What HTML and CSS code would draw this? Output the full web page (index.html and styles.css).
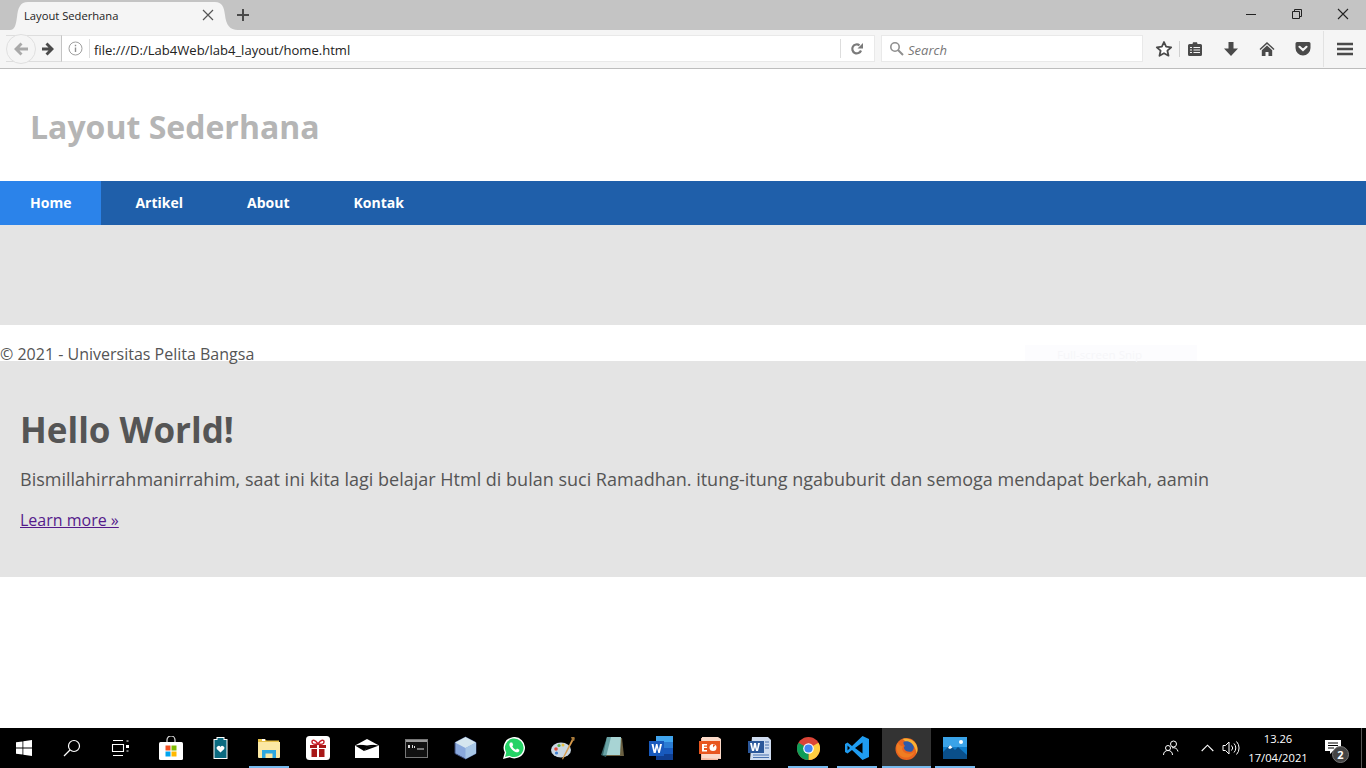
FILE: index.html
```html
<!DOCTYPE html>
<html lang="en">
<head>
    <meta charset="UTF-8">
    <meta name="viewport" content="width=device-width, initial-scale=1.0">
    <title>Layout Sederhana</title>
    <link rel="stylesheet" href="styles.css">
</head>
<body>
    <div class="tabstrip">
        <div class="tab">
            <span class="tab-title">Layout Sederhana</span>
            <svg class="tab-close" width="12" height="12" viewBox="0 0 12 12"><path d="M1 1l10 10M11 1L1 11" stroke="#555" stroke-width="1.2" fill="none"/></svg>
        </div>
        <svg class="new-tab" width="14" height="14" viewBox="0 0 14 14"><path d="M7 1v12M1 7h12" stroke="#4a4a4a" stroke-width="2" fill="none"/></svg>
        <div class="window-controls">
            <svg width="46" height="28" viewBox="0 0 46 28"><path d="M18 14.5h10" stroke="#222" fill="none"/></svg>
            <svg width="46" height="28" viewBox="0 0 46 28"><path d="M18.5 11.5h7v7h-7zM20.5 11.5v-2h7v7h-2" stroke="#222" fill="none"/></svg>
            <svg width="46" height="28" viewBox="0 0 46 28"><path d="M18 9l10 10M28 9L18 19" stroke="#222" stroke-width="1.1" fill="none"/></svg>
        </div>
    </div>

    <div class="toolbar">
        <div class="nav-buttons">
            <div class="back-btn">
                <svg width="16" height="14" viewBox="0 0 16 14"><path d="M7.500 0.500L1 7l6.500 6.500 2-2L6.500 8.500H15v-3H6.500l3-3z" fill="#a9a9a9"/></svg>
            </div>
            <svg class="forward" width="14" height="14" viewBox="0 0 14 14"><path d="M6.500 0.500L13 7l-6.500 6.500-2-2 3-3H1v-3h6.500l-3-3z" fill="#4a4a4a"/></svg>
        </div>
        <div class="urlbar">
            <svg class="info-icon" width="15" height="15" viewBox="0 0 15 15"><circle cx="7.500" cy="7.500" r="6.500" fill="none" stroke="#a0a0a0"/><path d="M7.500 6.500v4.500M7.500 3.800v1.500" stroke="#909090" stroke-width="1.400"/></svg>
            <span class="url-text">file:///D:/Lab4Web/lab4_layout/home.html</span>
            <div class="reload">
                <svg width="14" height="14" viewBox="0 0 14 14"><path d="M11 8.500A4.500 4.500 0 1 1 9.500 3.300" fill="none" stroke="#7a7a7a" stroke-width="2.200"/><path d="M7.500 6.500H13V1z" fill="#7a7a7a"/></svg>
            </div>
        </div>
        <div class="searchbar">
            <svg width="15" height="15" viewBox="0 0 15 15"><circle cx="6" cy="6" r="4.200" fill="none" stroke="#8f8f8f" stroke-width="1.600"/><path d="M9 9l5 5" stroke="#8f8f8f" stroke-width="2"/></svg>
            <span class="search-text">Search</span>
        </div>
        <div class="toolbar-icons">
            <svg class="ti-star" width="18" height="18" viewBox="0 0 18 18"><path d="M9 2l2.100 4.700 5.100.6-3.800 3.400 1.100 5L9 13.200l-4.500 2.500 1.100-5L1.800 7.300l5.100-.6z" fill="#fff" stroke="#4a4a4a" stroke-width="1.800" stroke-linejoin="round"/></svg>
            <span class="ti-sep"></span>
            <svg class="ti-clip" width="16" height="16" viewBox="0 0 16 16"><path d="M2.500 3H5.500L6 1.200h4L10.500 3h3A1.500 1.500 0 0 1 15 4.500v9a1.500 1.500 0 0 1-1.500 1.500h-11A1.500 1.500 0 0 1 1 13.500v-9A1.500 1.500 0 0 1 2.500 3z" fill="#4a4a4a"/><path d="M3 6.500h2M6.500 6.500h6.500M3 9h2M6.500 9h6.500M3 11.500h2M6.500 11.500h6.500" stroke="#f5f5f5" stroke-width="1.100"/></svg>
            <svg class="ti-down" width="16" height="16" viewBox="0 0 16 16"><path d="M5.500 1h5v6.500H15L8 15 1 7.500h4.500z" fill="#4a4a4a"/></svg>
            <svg class="ti-home" width="16" height="16" viewBox="0 0 16 16"><path d="M8 1L0.500 8l1 1L8 3l6.500 6 1-1z" fill="#4a4a4a"/><path d="M8 4.500L2.800 9.300V15h3.700v-4h3v4h3.700V9.300z" fill="#4a4a4a"/></svg>
            <svg class="ti-pocket" width="16" height="16" viewBox="0 0 16 16"><path d="M2 1h12a1.500 1.500 0 0 1 1.500 1.500V7A7.500 7.500 0 0 1 .5 7V2.500A1.500 1.500 0 0 1 2 1z" fill="#4a4a4a"/><path d="M4.500 5.800L8 9l3.500-3.200" fill="none" stroke="#f5f5f5" stroke-width="2.200" stroke-linecap="round"/></svg>
            <span class="ti-sep ti-sep-tall"></span>
            <svg class="ti-menu" width="16" height="14" viewBox="0 0 16 14"><path d="M0 2h16M0 7h16M0 12h16" stroke="#4a4a4a" stroke-width="2.600"/></svg>
        </div>
    </div>

    <div class="page">
        <header class="site-header">
            <h1>Layout Sederhana</h1>
        </header>
        <nav class="site-nav">
            <a class="active" href="#">Home</a>
            <a href="#">Artikel</a>
            <a href="#">About</a>
            <a href="#">Kontak</a>
        </nav>
        <div class="empty-band"></div>
        <footer class="site-footer">&copy; 2021 - Universitas Pelita Bangsa</footer>
        <section class="hero">
            <h1>Hello World!</h1>
            <p>Bismillahirrahmanirrahim, saat ini kita lagi belajar Html di bulan suci Ramadhan. itung-itung ngabuburit dan semoga mendapat berkah, aamin</p>
            <a href="#">Learn more &raquo;</a>
        </section>
        <div class="snip-toast">Full-screen Snip</div>
    </div>

    <div class="taskbar">
        <div class="sys-btn">
            <svg width="16" height="16" viewBox="0 0 16 16"><path d="M0 2.300l6.500-.9v6.200H0zM7.300 1.300L16 0v7.600H7.300zM0 8.400h6.500v6.200L0 13.700zM7.300 8.400H16V16l-8.700-1.300z" fill="#fff"/></svg>
        </div>
        <div class="sys-btn">
            <svg width="18" height="18" viewBox="0 0 18 18"><circle cx="11" cy="7" r="5.500" fill="none" stroke="#fff" stroke-width="1.200"/><path d="M7 11l-6 6" stroke="#fff" stroke-width="1.300"/></svg>
        </div>
        <div class="sys-btn">
            <svg width="18" height="16" viewBox="0 0 18 16"><path d="M2 .5h10M2 15.500h10M1.500 4.500h11v7h-11z" fill="none" stroke="#fff" stroke-width="1.100"/><path d="M15 5h3v3h-3z" fill="#fff"/><path d="M15.500 11h2M15.500 1h2" stroke="#fff"/></svg>
        </div>
        <div class="app-icons">
            <div class="app">
                <svg width="24" height="24" viewBox="0 0 24 24"><path d="M8 7V4a4 4 0 0 1 8 0v3" fill="none" stroke="#ddd" stroke-width="1.200"/><rect y="6" width="24" height="18" rx="1.500" fill="#fff"/><path d="M6.500 9.500h5v5h-5z" fill="#f25022"/><path d="M12.500 9.500h5v5h-5z" fill="#7fba00"/><path d="M6.500 15.500h5v5h-5z" fill="#00a4ef"/><path d="M12.500 15.500h5v5h-5z" fill="#ffb900"/></svg>
            </div>
            <div class="app">
                <svg width="15" height="22" viewBox="0 0 15 22"><path d="M3.500 0h8v2h3v20H.5V2h3z" fill="#fff"/><path d="M4.500 1h6v2h3v18h-12V3h3z" fill="#0b6a80"/><path d="M7.500 15.500L3.800 12a2 2 0 0 1 3.700-2 2 2 0 0 1 3.700 2z" fill="#fff"/></svg>
            </div>
            <div class="app underlined">
                <svg width="22" height="20" viewBox="0 0 22 20"><path d="M0 1h7l1.500 1.500H21V19H0z" fill="#e8c24a"/><path d="M0 4h22v15a1 1 0 0 1-1 1H1a1 1 0 0 1-1-1z" fill="#fbe8a4"/><path d="M4 1h3v2H4z" fill="#fff"/><path d="M4 20v-8h14v8h-3.500v-4.500h-7V20z" fill="#2ea8df"/></svg>
            </div>
            <div class="app">
                <svg width="24" height="24" viewBox="0 0 24 24"><rect width="24" height="24" rx="3.500" fill="#fff"/><path d="M4 9h16v3H4zM5.500 13h13v8h-13z" fill="#a81818"/><path d="M11 9h2v12h-2z" fill="#fff"/><path d="M12 8C9 3 6 3.500 6 6s3 2.500 6 2c3 .5 6 .5 6-2s-3-3-6 2z" fill="none" stroke="#c8202a" stroke-width="1.500"/></svg>
            </div>
            <div class="app">
                <svg width="24" height="19" viewBox="0 0 24 19"><path d="M0 6.500L12 0l12 6.500V19H0z" fill="#fff"/><path d="M0 6.500L9 12l3.500-4L24 6.500 12 5z" fill="#000"/><path d="M9 12l3.500-4.500L24 6.500z" fill="#000"/><path d="M5 5.500L12 1.500l7 4-7 1z" fill="#fff"/></svg>
            </div>
            <div class="app">
                <svg width="23" height="19" viewBox="0 0 23 19"><rect x=".5" y=".5" width="22" height="18" fill="#111" stroke="#777"/><path d="M1 1h21v2H1z" fill="#9a9a9a"/><path d="M3 6h2v3H3zM7 6h1v3H7zM9 7h1v2H9zM12 9.500h7v1h-7z" fill="#ddd"/></svg>
            </div>
            <div class="app">
                <svg width="23" height="24" viewBox="0 0 23 24"><path d="M11.500 1L22 6.500v11L11.500 23 1 17.500v-11z" fill="#89a8dc" stroke="#3a4a78" stroke-width="1"/><path d="M11.500 1L22 6.500 11.500 12 1 6.500z" fill="#d5e6ef"/><path d="M11.500 12L22 6.500v11L11.500 23z" fill="#a7c6e6"/></svg>
            </div>
            <div class="app">
                <svg width="22" height="22" viewBox="0 0 22 22"><path d="M1 21l1.500-5.500A10 10 0 1 1 6.500 19.500z" fill="#25d366" stroke="#fff" stroke-width="1.400"/><path d="M7.500 5.500c-1 .5-1.500 2-.8 3.700 1 2.500 3.500 5 6.300 6 1.500.5 2.800-.2 3.200-1.200l.2-1.200-2.400-1.200-1 1.200c-1.500-.6-3-2-3.700-3.600l.9-1.100-1-2.500z" fill="#fff"/></svg>
            </div>
            <div class="app">
                <svg width="24" height="24" viewBox="0 0 24 24"><ellipse cx="10" cy="14" rx="10" ry="7.500" fill="#c9d7e3"/><circle cx="5" cy="13" r="1.800" fill="#e24a3a"/><circle cx="8" cy="9.500" r="1.600" fill="#5fb04a"/><circle cx="12" cy="9" r="1.500" fill="#e8c040"/><circle cx="5.500" cy="17" r="1.600" fill="#3f7fd0"/><path d="M22 1l1.500 1.500L12 23.500l-1-.5z" fill="#d89a4a"/><path d="M20 1h3.500v3.500l-2 .5z" fill="#a87a3a"/></svg>
            </div>
            <div class="app">
                <svg width="23" height="22" viewBox="0 0 23 22"><path d="M6 1h15l2 18H5z" fill="#6b6042"/><path d="M6 0h14l-1 18H2z" fill="#a8d4d4"/><path d="M0 18L6 0h4L5 20z" fill="#4f8e92" opacity="0.7"/></svg>
            </div>
            <div class="app">
                <svg width="24" height="24" viewBox="0 0 24 24"><path d="M7 0h17v24H7z" fill="#185abd"/><path d="M7 0h17v6H7z" fill="#41a5ee"/><path d="M7 6h17v6H7z" fill="#2b7cd3"/><path d="M7 18h17v6H7z" fill="#103f91"/><rect y="5" width="15" height="15" fill="#185abd"/><path d="M2.500 8h2l1.200 6 1.300-6h1.500l1.300 6 1.200-6h2l-2.200 9H9.300L8 11.500 6.700 17H4.700z" fill="#fff"/></svg>
            </div>
            <div class="app">
                <svg width="23" height="23" viewBox="0 0 23 23"><path d="M2 1h17v22H2z" fill="#f4b8a0"/><path d="M3 0h16l3 2v20l-19-1z" fill="#fbd9c8"/><path d="M0 4h21v13H0z" fill="#e8561f"/><path d="M3 7h5v1.500H5v1.200h3v1.300H5V13h3v1.500H3z" fill="#fff"/><circle cx="14" cy="10.500" r="3.500" fill="#fff"/><path d="M14 10.500V7.500h3z" fill="#e8561f"/></svg>
            </div>
            <div class="app">
                <svg width="23" height="23" viewBox="0 0 23 23"><path d="M4 0h16l3 3v20H2z" fill="#cfdcf0"/><path d="M0 4h16v12H0z" fill="#2b579a"/><path d="M2 6h2l1 6 1-6h2l1 6 1-6h2l-2 8H8l-1-4-1 4H4z" fill="#fff"/><path d="M17 5h4M17 8h4M17 11h4M5 18h16M5 20.500h16" stroke="#4a72b0"/></svg>
            </div>
            <div class="app underlined">
                <svg width="23" height="23" viewBox="0 0 24 24"><circle cx="12" cy="12" r="12" fill="#db4437"/><path d="M12 12L22.400 6A12 12 0 0 1 12 24z" fill="#ffcd40"/><path d="M12 12L12 24A12 12 0 0 1 1.600 6z" fill="#0f9d58"/><circle cx="12" cy="12" r="5.500" fill="#fff"/><circle cx="12" cy="12" r="4.300" fill="#4285f4"/></svg>
            </div>
            <div class="app underlined">
                <svg width="24" height="24" viewBox="0 0 24 24"><path d="M17.500 0L24 3v18l-6.500 3L7 14l-4.500 3.500L0 16V8l2.500-1.500L7 10z" fill="#1f9cf0"/><path d="M17.500 6.500L10 12l7.500 5.500z" fill="#000"/><path d="M2.500 9.500v5L5 12z" fill="#000"/></svg>
            </div>
            <div class="app active underlined">
                <svg width="23" height="23" viewBox="0 0 24 24"><circle cx="12" cy="12.500" r="11.500" fill="#e8641f"/><path d="M8 2c6-2 15 2 15.500 10.500 0 2-.3 3.500-1 5C22 11 18 6 12 5.500z" fill="#f9b233"/><path d="M9 5c3-1.500 9 0 10.500 5 .5 2-.5 4-2 5-3 1-7 0-8-3-.5-1 0-2 1-2.500C9 8 8.500 6.500 9 5z" fill="#2f5aa8"/><path d="M3 6C0 11 2 19 8.500 21c5.500 1.500 10.500-1.500 12-6-3 3-8.500 3.500-11.500 .5C7 13.500 7 11.500 8.500 10 6 9.500 4 8 3 6z" fill="#ef7d22"/></svg>
            </div>
            <div class="app underlined">
                <svg width="24" height="22" viewBox="0 0 24 22"><rect width="24" height="22" fill="#0f7cc9"/><path d="M0 0h24v10H0z" fill="#3aa3e8"/><path d="M0 22V15l7-7 5 5 3-3 9 8v4z" fill="#0a4f8a"/><path d="M7 8l2.500 2.500L7 12l-2-1z" fill="#fff"/><circle cx="18" cy="5" r="2" fill="#fff"/></svg>
            </div>
        </div>
        <div class="tray">
            <svg class="tray-people" width="16" height="16" viewBox="0 0 16 16"><circle cx="10.500" cy="4" r="3" fill="none" stroke="#fff"/><circle cx="5" cy="8" r="2.500" fill="none" stroke="#fff"/><path d="M.5 15c0-3 2-4.500 4.500-4.500S9.500 12 9.500 15M9 7.800c2.800-.6 5.500 .7 6 3.700" fill="none" stroke="#fff"/></svg>
            <svg class="tray-caret" width="13" height="8" viewBox="0 0 13 8"><path d="M.7 7L6.500 1.200 12.300 7" fill="none" stroke="#fff" stroke-width="1.100"/></svg>
            <svg class="tray-volume" width="18" height="14" viewBox="0 0 18 14"><path d="M1 4.500h2.500L7 1v12L3.500 9.500H1z" fill="none" stroke="#fff"/><path d="M9.500 4.500a3.500 3.500 0 0 1 0 5M12 2.500a6.500 6.500 0 0 1 0 9M14.500 .5a9.500 9.500 0 0 1 0 13" fill="none" stroke="#fff"/></svg>
            <div class="clock">
                <span>13.26</span>
                <span>17/04/2021</span>
            </div>
            <div class="notif">
                <svg width="17" height="15" viewBox="0 0 17 15"><path d="M0 0h16v11H8l-3 3v-3H0z" fill="#fff"/><path d="M3 3h10M3 5.500h10M3 8h6" stroke="#000"/></svg>
                <span class="notif-count">2</span>
            </div>
            <span class="show-desktop"></span>
        </div>
    </div>
</body>
</html>
```

FILE: styles.css
```css
* {
    box-sizing: border-box;
}

body {
    margin: 0;
    height: 100vh;
    overflow: hidden;
    display: flex;
    flex-direction: column;
    background: #fff;
    font-family: "Open Sans", "Noto Sans", sans-serif;
}

svg {
    display: block;
    flex: none;
}

/* browser chrome */
.tabstrip {
    height: 30px;
    flex: none;
    display: flex;
    align-items: flex-end;
    background: #c4c4c4;
    padding-left: 10px;
}

.tab {
    width: 228px;
    height: 28px;
    display: flex;
    align-items: center;
    padding: 0 24px 2px 14px;
    background: #f5f5f5;
    clip-path: path("M0 28C5 28 6 22 7 15 8 6 10 0 18 0H205C212 0 214 5 215 13 216 23 220 28 228 28Z");
}

.tab-title {
    flex: 1;
    font-size: 11.2px;
    color: #222;
}

.new-tab {
    margin: 0 0 8px -2px;
}

.window-controls {
    display: flex;
    margin-left: auto;
    align-self: flex-start;
}

.toolbar {
    height: 39px;
    flex: none;
    display: flex;
    align-items: center;
    background: #f5f5f5;
    border-bottom: 1px solid #bdbdbd;
    padding: 0 0 1px 6px;
}

.nav-buttons {
    width: 56px;
    height: 27px;
    display: flex;
    align-items: center;
    background: #f5f5f5;
    border: 1px solid #ddd;
    border-left: none;
    border-right-color: #c4c4c4;
}

.back-btn {
    width: 30px;
    height: 30px;
    flex: none;
    display: flex;
    align-items: center;
    justify-content: center;
    border: 1px solid #e0e0e0;
    border-radius: 50%;
    background: #f5f5f5;
}

.forward {
    margin: 1px 0 0 5px;
}

.urlbar {
    width: 813px;
    height: 27px;
    display: flex;
    align-items: center;
    background: #fff;
    border: 1px solid #e9e9e9;
    border-left: none;
    padding-left: 6px;
}

.info-icon {
    margin-right: 6px;
}

.url-text {
    flex: 1;
    height: 19px;
    line-height: 22px;
    padding-left: 4px;
    border-left: 1px solid #ddd;
    font-size: 13.05px;
    color: #222;
}

.reload {
    width: 34px;
    height: 19px;
    padding-right: 2px;
    display: flex;
    align-items: center;
    justify-content: center;
    border-left: 1px solid #ddd;
}

.searchbar {
    width: 262px;
    height: 27px;
    margin-left: 6px;
    display: flex;
    align-items: center;
    gap: 4px;
    padding-left: 7px;
    background: #fff;
    border: 1px solid #e9e9e9;
}

.search-text {
    font-size: 13px;
    line-height: 20px;
    padding-top: 2px;
    font-style: italic;
    color: #777;
}

.toolbar-icons {
    flex: 1;
    display: flex;
    align-items: center;
    height: 100%;
    padding-left: 12px;
}

.ti-sep {
    width: 1px;
    height: 16px;
    margin-left: 6px;
    background: #d0d0d0;
}

.ti-clip {
    margin-left: 7px;
}

.ti-down {
    margin-left: 20px;
}

.ti-home {
    margin-left: 20px;
}

.ti-pocket {
    margin-left: 20px;
}

.ti-sep-tall {
    height: 36px;
    margin-left: 12px;
    background: #e2e2e2;
}

.ti-menu {
    margin-left: 13px;
}

/* the page itself */
.page {
    flex: 1;
    position: relative;
    color: #555;
}

.site-header {
    height: 112px;
    padding: 2px 30px 0;
    display: flex;
    align-items: center;
}

.site-header h1 {
    margin: 0;
    font-size: 32px;
    font-weight: 700;
    color: #b5b5b5;
}

.site-nav {
    height: 44px;
    display: flex;
    background: #1f5faa;
}

.site-nav a {
    display: block;
    padding: 0 30px 0 34px;
    line-height: 44px;
    font-size: 14px;
    font-weight: 700;
    color: #fff;
    text-decoration: none;
}

.site-nav a.active {
    padding: 0 30px;
    background: #2b83ea;
}

.empty-band {
    height: 100px;
    background: #e4e4e4;
}

.site-footer {
    height: 36px;
    padding-top: 18px;
    font-size: 16px;
    line-height: 22px;
}

.hero {
    height: 216px;
    padding: 42px 20px 0;
    background: #e4e4e4;
}

.hero h1 {
    margin: 0 0 9px;
    font-size: 35px;
    line-height: 54px;
    font-weight: 700;
}

.hero p {
    margin: 0 0 16px;
    font-size: 18px;
    line-height: 27px;
}

.hero a {
    font-size: 16px;
    color: #551a8b;
}

.snip-toast {
    position: absolute;
    left: 1025px;
    top: 276px;
    width: 172px;
    height: 16px;
    padding-left: 32px;
    font-size: 11.6px;
    line-height: 20px;
    color: #f6f6f9;
    background: #fcfcfe;
}

/* windows taskbar */
.taskbar {
    height: 40px;
    flex: none;
    display: flex;
    align-items: center;
    background: #000;
}

.sys-btn {
    width: 48px;
    height: 40px;
    flex: none;
    display: flex;
    align-items: center;
    justify-content: center;
}

.app-icons {
    display: flex;
    flex: none;
    margin-left: 2.500px;
}

.app {
    width: 49px;
    height: 40px;
    flex: none;
    display: flex;
    align-items: center;
    justify-content: center;
    position: relative;
}

.app.underlined::after {
    content: "";
    position: absolute;
    left: 4px;
    right: 5px;
    bottom: 0;
    height: 2px;
    background: #76b9ed;
}

.app.active {
    background: #333;
}

.app.active::after {
    left: 0;
    right: 0;
}

.tray {
    flex: none;
    height: 40px;
    margin-left: auto;
    padding-right: 4px;
    display: flex;
    align-items: center;
    color: #fff;
}

.tray-caret {
    margin-left: 21.500px;
}

.tray-volume {
    margin-left: 8.500px;
}

.clock {
    width: 72px;
    margin-left: 2px;
    display: flex;
    flex-direction: column;
    align-items: center;
    font-size: 11.2px;
    line-height: 19px;
}

.notif {
    position: relative;
    margin-left: 11px;
    margin-top: -2px;
}

.notif-count {
    position: absolute;
    left: 7px;
    top: 6px;
    width: 17px;
    height: 17px;
    border-radius: 50%;
    background: #444;
    border: 1px solid #777;
    font-size: 11px;
    line-height: 15px;
    font-weight: 700;
    text-align: center;
}

.show-desktop {
    width: 1px;
    height: 40px;
    margin-left: 19px;
    background: #555;
}
```
